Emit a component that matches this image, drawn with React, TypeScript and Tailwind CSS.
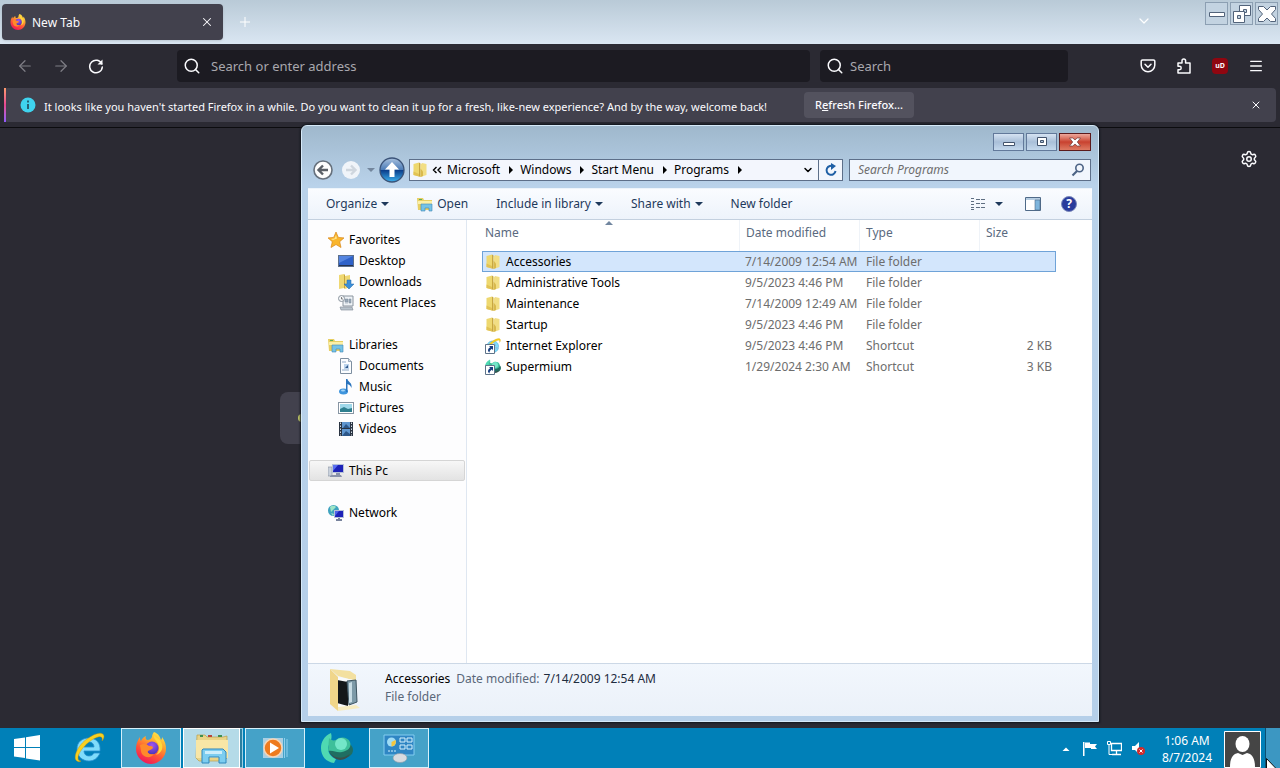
import { useId } from "react";
import type { ReactNode } from "react";
import { ArrowLeft, ArrowRight, ChevronDown, Menu, Plus, Search, Settings, X } from "lucide-react";

const FirefoxLogo = ({ className }: { className: string }) => {
  const id = useId();
  return (
    <svg viewBox="0 0 32 32" className={className} aria-hidden="true">
      <defs>
        <linearGradient id={id + "a"} x1="0.8" y1="0" x2="0.3" y2="1">
          <stop offset="0" stopColor="#fff04a" />
          <stop offset="0.35" stopColor="#ffa22e" />
          <stop offset="0.65" stopColor="#ff5537" />
          <stop offset="1" stopColor="#f0155c" />
        </linearGradient>
        <radialGradient id={id + "b"} cx="0.5" cy="0.3" r="0.7">
          <stop offset="0" stopColor="#a255f0" />
          <stop offset="1" stopColor="#4a35b8" />
        </radialGradient>
      </defs>
      <path
        d="M19 0c5 2 6 5 7 8 1-1 1-2 1-3 3 4 4 8 4 12 0 8-7 15-15 15S1 25 1 17c0-4 1-8 4-12 0 2 0 3 1 4 1-2 2-4 5-5-1 2 0 3 1 4 3 0 4-1 5-3 0-2 1-4 2-5z"
        fill={`url(#${id}a)`}
      />
      <circle cx="17" cy="16" r="6.500" fill={`url(#${id}b)`} />
      <path d="M5 13c4-2 7-1 9 1 2 0 4 0 4 2-2 2-4 2-5 3-1 2 2 4 6 3-3 5-12 4-13-3z" fill="#ff8a2b" />
      <path d="M19 3c-1 5 5 6 5 13 0 3-1 5-3 7 6-2 8-8 5-13-1-3-5-4-7-7z" fill="#ffd83c" />
    </svg>
  );
};

const IeLogo = ({ className }: { className: string }) => (
  <svg viewBox="0 0 32 32" className={className} aria-hidden="true">
    <path
      d="M27 21c-2 5-6 8-11 8-7 0-12-5-12-12S9 6 16 6s12 5 11 13H11c0 3 2 5 5 5 2 0 4-1 5-3zM11 15h10c0-3-2-5-5-5s-5 2-5 5z"
      fill="#7fdcfb"
      stroke="#2a8fd0"
      strokeWidth="0.800"
    />
    <path d="M4 29C-1 26 5 13 14 7 22 1 30-1 31 4c0 2-1 4-2 5 1-4-1-5-4-4C17 7 5 19 5 26c0 2 1 3 3 3-1 1-3 1-4 0z" fill="#f8d01f" stroke="#c48f0b" strokeWidth="0.400" />
  </svg>
);

const SupermiumLogo = ({ className }: { className: string }) => (
  <svg viewBox="0 0 32 32" className={className} aria-hidden="true">
    <ellipse cx="20" cy="18" rx="12" ry="9" fill="#1f6e62" />
    <path d="M10 1C3 4 0 10 0 16c0 8 5 14 13 15l2-4c-5-2-8-6-8-11 1-5 5-8 3-15z" fill="#4fd9b2" />
    <path d="M8 6c2 2 4 3 7 2 4-4 12-3 14 2 2 6-3 9-8 10-6 1-8-2-14-1z" fill="#3ebf9a" />
    <circle cx="20" cy="12" r="6" fill="#74e6c8" />
    <path d="M9 21c5 6 13 6 20 1-4 7-14 9-20-1z" fill="#3a4f4a" />
  </svg>
);

const Folder = () => (
  <svg viewBox="0 0 16 16" className="size-4" aria-hidden="true">
    <path d="M1.500 2L7 .500v14L1.500 13z" fill="#eed86f" />
    <path d="M7 .5l1.500 1V15L7 14.500z" fill="#c8a741" />
    <path d="M8.500 3L10 1l4.500 1v11l-6 2z" fill="#f2de84" />
    <path d="M8.500 6.500l2.500 3V14l-2.500 1z" fill="#d9b94d" />
    <path d="M1.500 9.500L7 12v2.500L1.500 13z" fill="#e2c355" />
  </svg>
);

const LibraryIcon = () => (
  <svg viewBox="0 0 16 16" className="size-4" aria-hidden="true">
    <path d="M0 2h6l1 2h8v10H1z" fill="#e8cf63" />
    <path d="M1 5h14v3H1z" fill="#fbf0a8" />
    <path d="M2 3h3v1H2z" fill="#5faf58" />
    <path d="M4 8h11v7h-3v-3H8v3H4z" fill="#76c3e6" stroke="#4288b5" strokeWidth="0.600" />
  </svg>
);

const StarIcon = () => (
  <svg viewBox="0 0 16 16" className="size-4" aria-hidden="true">
    <path d="M8 0l2.300 5.400 5.700.5-4.300 3.800 1.300 5.800L8 12.500l-5 3 1.300-5.800L0 5.900l5.700-.5z" fill="#f9b52b" stroke="#d9861a" strokeWidth="0.700" />
    <path d="M8 3l1 3.500L5 8 3 7l3.500-.5z" fill="#ffe48a" />
  </svg>
);

const DesktopIcon = () => (
  <svg viewBox="0 0 16 16" className="size-4" aria-hidden="true">
    <rect x="0.500" y="2.500" width="15" height="11" fill="#2f62c9" stroke="#5c6f8c" />
    <path d="M1 3h14L1 10z" fill="#5585e0" />
    <path d="M1 12h14v1H1z" fill="#26334f" />
  </svg>
);

const DownloadsIcon = () => (
  <svg viewBox="0 0 16 16" className="size-4" aria-hidden="true">
    <path d="M1 1l5-1v14l-5 1zM7 2l5-1v12l-5 2z" fill="#efd873" />
    <path d="M6 0l1 1v14l-1-1z" fill="#c5a33c" />
    <path d="M9 6h4v4h3l-5 5-5-5h3z" fill="#3c8fd8" stroke="#2468a8" strokeWidth="0.500" />
  </svg>
);

const RecentIcon = () => (
  <svg viewBox="0 0 16 16" className="size-4" aria-hidden="true">
    <path d="M5 1h10v10H5z" fill="#eef2f6" stroke="#8a949e" />
    <path d="M7 4h3v3H7zM11 4h2v4h-2zM7 8h3" fill="#9aa9b8" stroke="#7b8a99" strokeWidth="0.500" />
    <circle cx="3.500" cy="3.500" r="3" fill="#f4f6f8" stroke="#8a949e" />
    <path d="M3.500 2v2h1.500" stroke="#555" fill="none" strokeWidth="0.700" />
    <path d="M2 12h12l1 3H3z" fill="#b9c3cc" stroke="#7d8893" strokeWidth="0.600" />
  </svg>
);

const DocumentsIcon = () => (
  <svg viewBox="0 0 16 16" className="size-4" aria-hidden="true">
    <path d="M2.500.5h8l3 3v12h-11z" fill="#fbfdff" stroke="#7d8ea0" />
    <path d="M4 4h4M4 12h7" stroke="#8fa9c6" />
    <path d="M6 6h5v5H6z" fill="#bcd4ec" />
    <path d="M7 10l3-3v3z" fill="#31598c" />
    <path d="M10.500.5v3h3" fill="#d6e1ec" stroke="#7d8ea0" strokeWidth="0.700" />
  </svg>
);

const MusicIcon = () => (
  <svg viewBox="0 0 16 16" className="size-4" aria-hidden="true">
    <ellipse cx="5.500" cy="12.500" rx="4.500" ry="3" fill="#3f95dd" />
    <path d="M8 0h1.500c0 3 5 3 4 9-1-3-3-3.500-4-4v8H8z" fill="#2a74bd" />
    <ellipse cx="5" cy="11.500" rx="2" ry="1" fill="#a4d4f7" />
  </svg>
);

const PicturesIcon = () => (
  <svg viewBox="0 0 16 16" className="size-4" aria-hidden="true">
    <rect x="0.500" y="2.500" width="15" height="11" fill="#fff" stroke="#8795a3" />
    <path d="M2 4h12v8H2z" fill="#9fd8ea" />
    <path d="M2 9l4-2 4 2 4-1v4H2z" fill="#2e7f8f" />
  </svg>
);

const VideosIcon = () => (
  <svg viewBox="0 0 16 16" className="size-4" aria-hidden="true">
    <path d="M1 1h14v14H1z" fill="#2a3442" />
    <path d="M4 1h8v6H4zM4 8h8v7H4z" fill="#5f96cf" />
    <path d="M5 7l3-4 4 4zM4 15l4-5 4 3v2z" fill="#2c5688" />
    <path d="M2.500 1.500v13M13.500 1.500v13" stroke="#d5dde6" strokeDasharray="1.500 1.500" />
  </svg>
);

const ComputerIcon = () => (
  <svg viewBox="0 0 16 16" className="size-4" aria-hidden="true">
    <path d="M0 4h4v9H0z" fill="#c9d1dc" stroke="#8791a0" strokeWidth="0.600" />
    <path d="M4 1h12v9H4z" fill="#b5c1d8" />
    <path d="M5 2h10v7H5z" fill="#1d22b8" />
    <path d="M5 2h5l-5 6z" fill="#5b6ff0" />
    <path d="M8 10h4v2H8zM2 13l2-1h9l1 2H2z" fill="#8a93ab" />
  </svg>
);

const NetworkIcon = () => (
  <svg viewBox="0 0 16 16" className="size-4" aria-hidden="true">
    <circle cx="5.500" cy="5.500" r="5.500" fill="#3fa3bf" />
    <path d="M2 2c3-2 5-1 6 0L5 5 3 7zM3 8l3 1-1 2z" fill="#9ee5c6" />
    <path d="M6 5h10v8H6z" fill="#b5c1d8" />
    <path d="M7 6h8v6H7z" fill="#1d22b8" />
    <path d="M7 6h4l-4 5z" fill="#4f63e8" />
    <path d="M10 13h2v1h2v2H8v-2h2z" fill="#77829c" />
  </svg>
);

const Shortcut = ({ children }: { children: ReactNode }) => (
  <span className="relative block size-4">
    {children}
    <svg viewBox="0 0 10 10" className="absolute bottom-0 left-0 size-[10px]" aria-hidden="true">
      <path d="M.5.5h9v9h-9z" fill="#fff" stroke="#5e7389" />
      <path d="M4 2h4v4L6.700 4.700C5 6 4.500 7 4.500 8.500 2 7 3 4.500 5.300 3.300z" fill="#173e80" />
    </svg>
  </span>
);

const Caret = ({ className = "size-2" }: { className?: string }) => (
  <svg viewBox="0 0 8 8" className={className} aria-hidden="true">
    <path d="M0 2h8L4 6z" fill="currentColor" />
  </svg>
);

const crumbs = ["Microsoft", "Windows", "Start Menu", "Programs"];

const groups = [
  {
    label: "Favorites",
    icon: <StarIcon />,
    items: [
      { label: "Desktop", icon: <DesktopIcon /> },
      { label: "Downloads", icon: <DownloadsIcon /> },
      { label: "Recent Places", icon: <RecentIcon /> },
    ],
  },
  {
    label: "Libraries",
    icon: <LibraryIcon />,
    items: [
      { label: "Documents", icon: <DocumentsIcon /> },
      { label: "Music", icon: <MusicIcon /> },
      { label: "Pictures", icon: <PicturesIcon /> },
      { label: "Videos", icon: <VideosIcon /> },
    ],
  },
  { label: "This Pc", icon: <ComputerIcon />, items: [], active: true },
  { label: "Network", icon: <NetworkIcon />, items: [] },
];

const files = [
  { name: "Accessories", date: "7/14/2009 12:54 AM", type: "File folder", size: "", icon: <Folder />, selected: true },
  { name: "Administrative Tools", date: "9/5/2023 4:46 PM", type: "File folder", size: "", icon: <Folder /> },
  { name: "Maintenance", date: "7/14/2009 12:49 AM", type: "File folder", size: "", icon: <Folder /> },
  { name: "Startup", date: "9/5/2023 4:46 PM", type: "File folder", size: "", icon: <Folder /> },
  { name: "Internet Explorer", date: "9/5/2023 4:46 PM", type: "Shortcut", size: "2 KB", icon: <Shortcut><IeLogo className="size-4" /></Shortcut> },
  { name: "Supermium", date: "1/29/2024 2:30 AM", type: "Shortcut", size: "3 KB", icon: <Shortcut><SupermiumLogo className="size-4" /></Shortcut> },
];

const TabStrip = () => (
  <div className="flex h-[44px] items-start bg-linear-to-b from-[#b9cad7] to-[#dae6f2] pl-[2px]">
    <div className="mt-1 flex h-9 w-[221px] items-center rounded bg-[#42414d] pr-2 pl-2 text-[#fbfbfe] shadow">
      <FirefoxLogo className="size-4" />
      <span className="ml-[6px] flex-auto pt-[2px]">New Tab</span>
      <button aria-label="Close tab" className="flex size-4 items-center justify-center">
        <X className="size-[14px]" strokeWidth={1.8} />
      </button>
    </div>
    <button aria-label="New tab" className="mt-[14px] ml-[14px] text-white">
      <Plus className="size-4" strokeWidth={1.5} />
    </button>
    <button aria-label="List tabs" className="mt-[13px] mr-[53px] ml-auto text-white">
      <ChevronDown className="size-4" strokeWidth={1.8} />
    </button>
    <div className="mt-[2px] mr-[2px] flex gap-[2px]">
      <button aria-label="Minimize" className="flex h-[23px] w-[23px] items-center justify-center border border-[#8c9fb2] bg-[#c3d3e1]">
        <svg viewBox="0 0 18 18" className="size-[18px]"><path d="M1.500 7.500h15v4h-15z" fill="#fff" stroke="#52637a" /></svg>
      </button>
      <button aria-label="Restore" className="flex h-[23px] w-[23px] items-center justify-center border border-[#8c9fb2] bg-[#c3d3e1]">
        <svg viewBox="0 0 20 20" className="size-5" fillRule="evenodd" fill="#fff" stroke="#52637a">
          <path d="M7.500 1.500h11v10h-11zM11.500 5.500v3h3v-3z" />
          <path d="M1.500 7.500h11v11h-11zM5.500 11.500v3h3v-3z" />
        </svg>
      </button>
      <button aria-label="Close" className="flex h-[23px] w-[23px] items-center justify-center border border-[#8c9fb2] bg-[#c3d3e1]">
        <svg viewBox="0 0 20 20" className="size-5">
          <path d="M1.500 2.500h5L10 6l3.500-3.500h5v3L14.500 10l4 4.500v3h-5L10 14l-3.500 3.500h-5v-3l4-4.500-4-4.500z" fill="#fff" stroke="#52637a" />
        </svg>
      </button>
    </div>
  </div>
);

const NavBar = () => (
  <div className="flex h-[43px] items-center bg-[#2b2a33] pr-4 pl-4 text-[#fbfbfe]">
    <button aria-label="Back" className="text-[#7f7e86]"><ArrowLeft className="size-[18px]" strokeWidth={1.6} /></button>
    <button aria-label="Forward" className="ml-[18px] text-[#7f7e86]"><ArrowRight className="size-[18px]" strokeWidth={1.6} /></button>
    <button aria-label="Reload" className="ml-[18px]">
      <svg viewBox="0 0 16 16" className="size-4" fill="none" stroke="currentColor" strokeWidth="1.500" strokeLinecap="round">
        <path d="M13.800 6A6.300 6.300 0 1 0 14.300 9" />
        <path d="M14.500 1.500v5h-5z" fill="currentColor" stroke="none" />
      </svg>
    </button>
    <label className="ml-[73px] flex h-8 flex-auto items-center gap-[10px] rounded bg-[#1c1b22] pl-[6px]">
      <Search className="size-[18px] flex-none" strokeWidth={2} />
      <input aria-label="Address" placeholder="Search or enter address" className="w-full bg-transparent text-[13px] outline-none placeholder:text-[#a9a8ae]" />
    </label>
    <label className="mr-[72px] ml-[10px] flex h-8 w-[248px] items-center gap-[6px] rounded bg-[#1c1b22] pl-[6px]">
      <Search className="size-[18px] flex-none" strokeWidth={2} />
      <input aria-label="Search" placeholder="Search" className="w-full bg-transparent text-[13px] outline-none placeholder:text-[#a9a8ae]" />
    </label>
    <div className="flex gap-5">
      <button aria-label="Save to Pocket">
        <svg viewBox="0 0 16 16" className="size-4" fill="none" stroke="currentColor" strokeWidth="1.500" strokeLinecap="round" strokeLinejoin="round">
          <path d="M2.500 2h11a1.300 1.300 0 0 1 1.300 1.300V7a6.800 6.800 0 0 1-13.600 0V3.300A1.300 1.300 0 0 1 2.500 2z" />
          <path d="M5 6.300l3 3 3-3" />
        </svg>
      </button>
      <button aria-label="Extensions">
        <svg viewBox="0 0 16 16" className="size-4" fill="none" stroke="currentColor" strokeWidth="1.500" strokeLinejoin="round">
          <path d="M6 5V2.800a1.800 1.800 0 0 1 3.600 0V5H14v10H2v-3.300h1.500a1.700 1.700 0 0 0 0-3.400H2V5z" />
        </svg>
      </button>
      <button aria-label="uBlock Origin" className="flex size-4 items-center justify-center rounded bg-[#8f0610] text-[7px] font-bold">uD</button>
      <button aria-label="Menu"><Menu className="size-4" strokeWidth={2} /></button>
    </div>
  </div>
);

const Notice = () => (
  <div className="h-[41px] border-b border-[#0c0c0f] bg-[#2b2a33] px-1 pt-[1px]">
    <div className="flex h-[34px] items-center rounded bg-[#42414d] pr-3 text-[#fbfbfe]">
      <div className="h-full w-[2px] bg-linear-to-b from-[#ff9a6b] via-[#e6458f] to-[#9059ff]" />
      <svg viewBox="0 0 16 16" className="ml-[14px] size-4" aria-hidden="true">
        <circle cx="8" cy="8" r="7.500" fill="#3fd3ee" />
        <path d="M8 3.500v2M8 7v5" stroke="#1f4456" strokeWidth="1.600" />
      </svg>
      <p className="ml-2 w-[740px] pt-[3px] text-[11px]">
        It looks like you haven't started Firefox in a while. Do you want to clean it up for a fresh, like-new experience? And by the way, welcome back!
      </p>
      <button className="ml-5 h-[26px] w-[110px] rounded bg-[#53525e] text-[11px] font-medium">
        R<span className="underline">e</span>fresh Firefox...
      </button>
      <button aria-label="Dismiss" className="mr-[2px] ml-auto"><X className="size-3" /></button>
    </div>
  </div>
);

const WindowControls = () => (
  <div className="flex h-[25px] items-end justify-end gap-[2px] pr-[1px]">
    <button aria-label="Minimize" className="flex h-[18px] w-[31px] items-center justify-center border border-[#62799a] bg-linear-to-b from-[#d5e3f2] via-[#a9bfd8] to-[#c4d8ec]">
      <svg viewBox="0 0 12 10" className="h-[10px] w-3"><path d="M.5 5.500h11v3H.5z" fill="#fff" stroke="#42536c" /></svg>
    </button>
    <button aria-label="Maximize" className="flex h-[18px] w-[31px] items-center justify-center border border-[#62799a] bg-linear-to-b from-[#d5e3f2] via-[#a9bfd8] to-[#c4d8ec]">
      <svg viewBox="0 0 12 10" className="h-[10px] w-3"><path d="M1.500.5h9v8h-9zM4.500 3.500h3v2h-3z" fill="#fff" fillRule="evenodd" stroke="#42536c" /></svg>
    </button>
    <button aria-label="Close" className="flex h-[18px] w-[32px] items-center justify-center border border-[#5b1a1c] bg-linear-to-b from-[#eda79b] via-[#c8412f] to-[#dd7a63]">
      <svg viewBox="0 0 12 10" className="h-[10px] w-3">
        <path d="M.5 1h3.300L6 3l2.200-2h3.300L8.300 5l3.200 4H8.200L6 7 3.800 9H.5l3.200-4z" fill="#fff" stroke="#6b3a3a" strokeWidth="0.700" />
      </svg>
    </button>
  </div>
);

const LocationBar = () => (
  <div className="flex h-[37px] items-center pr-[1px] pl-[5px]">
    <button aria-label="Back">
      <svg viewBox="0 0 20 20" className="size-5">
        <circle cx="10" cy="10" r="9" fill="#fdfdfd" stroke="#66707c" strokeWidth="1.600" />
        <path d="M15 10H6M10 5.500L5.500 10l4.500 4.500" fill="none" stroke="#5a5f66" strokeWidth="2.400" />
      </svg>
    </button>
    <button aria-label="Forward" className="ml-2">
      <svg viewBox="0 0 20 20" className="size-5">
        <circle cx="10" cy="10" r="9" fill="#f0f4f9" />
        <path d="M5 10h9M10 5.500l4.500 4.500-4.500 4.500" fill="none" stroke="#cfd6de" strokeWidth="2.400" />
      </svg>
    </button>
    <button aria-label="Recent pages" className="ml-[6px] text-[#73869d]"><Caret /></button>
    <button aria-label="Up" className="ml-1">
      <svg viewBox="0 0 26 26" className="size-[26px]">
        <defs>
          <linearGradient id="up" x1="0" y1="0" x2="0" y2="1">
            <stop offset="0" stopColor="#a9c1de" />
            <stop offset="0.480" stopColor="#4d7db8" />
            <stop offset="0.520" stopColor="#0b3f8c" />
            <stop offset="1" stopColor="#3eb2ee" />
          </linearGradient>
        </defs>
        <circle cx="13" cy="13" r="12" fill="url(#up)" stroke="#3b5378" strokeWidth="1.300" />
        <path d="M13 5l7 7.500h-4.500V20h-5v-7.500H6z" fill="#fff" />
      </svg>
    </button>
    <nav aria-label="Path" className="ml-1 flex h-[22px] flex-auto items-center border border-[#5d6f89] bg-[#f3f6fd] pl-[2px] text-black">
      <Folder />
      <svg viewBox="0 0 10 8" className="ml-1 h-2 w-[10px]" fill="none" stroke="currentColor" strokeWidth="1.400" aria-hidden="true">
        <path d="M4.500 1l-3 3 3 3M9 1L6 4l3 3" />
      </svg>
      {crumbs.map((name) => (
        <div key={name} className="flex items-center">
          <button className="ml-1 px-[1px]">{name}</button>
          <svg viewBox="0 0 8 8" className="ml-[6px] size-2" aria-hidden="true"><path d="M2 0v8l4-4z" fill="currentColor" /></svg>
        </div>
      ))}
      <button aria-label="Previous locations" className="mr-1 ml-auto"><ChevronDown className="size-3" strokeWidth={3} /></button>
      <button aria-label="Refresh" className="flex h-full w-6 items-center justify-center border-l border-[#5d6f89]">
        <svg viewBox="0 0 14 14" className="size-[14px]">
          <path d="M9.500 3.500A4.500 4.500 0 1 0 11.500 8" fill="none" stroke="#1f5fa5" strokeWidth="2" />
          <path d="M7 0l5 3-5 4z" fill="#1f5fa5" />
        </svg>
      </button>
    </nav>
    <label className="ml-[6px] flex h-[22px] w-[242px] items-center border border-[#5d6f89] bg-[#f1f6fd] pr-[5px] pl-2">
      <input aria-label="Search Programs" placeholder="Search Programs" className="w-full bg-transparent italic outline-none placeholder:text-[#6d6d6d]" />
      <svg viewBox="0 0 14 14" className="size-[14px] shrink-0" fill="none" stroke="#4c6385" aria-hidden="true">
        <circle cx="8.500" cy="5" r="3.700" strokeWidth="1.600" />
        <path d="M6 8l-4.500 4.500" strokeWidth="2.200" />
      </svg>
    </label>
  </div>
);

const CommandBar = () => (
  <div className="flex h-8 items-center border-t border-b border-t-[#edf4fb] border-b-[#c3d0df] bg-linear-to-b from-[#fafcff] to-[#edf3fb] px-[18px] text-[#1e395b]">
    <button className="flex items-center gap-1">Organize <Caret /></button>
    <button className="ml-7 flex items-center gap-1"><LibraryIcon /> Open</button>
    <button className="ml-7 flex items-center gap-1">Include in library <Caret /></button>
    <button className="ml-7 flex items-center gap-1">Share with <Caret /></button>
    <button className="ml-7">New folder</button>
    <button aria-label="Change view" className="ml-auto flex items-center gap-[9px]">
      <svg viewBox="0 0 16 14" className="h-[14px] w-4" stroke="#5f6f82">
        <path d="M1 1.500h3M1 4.500h3M1 7.500h3M1 10.500h3M1 12.500h3" />
        <path d="M6 2.500h9M6 6.500h9M6 10.500h9" strokeDasharray="4 1" />
      </svg>
      <Caret />
    </button>
    <button aria-label="Preview pane" className="ml-[22px]">
      <svg viewBox="0 0 16 14" className="h-[14px] w-4">
        <path d="M.5.500h15v13H.5z" fill="#fff" stroke="#4f6a88" />
        <path d="M1 1h14v2H1z" fill="#b6cde2" />
        <path d="M10 3h5v10h-5z" fill="#7fb5dc" stroke="#4f6a88" strokeWidth="0.600" />
      </svg>
    </button>
    <button aria-label="Help" className="-mr-[3px] ml-5 flex size-4 items-center justify-center rounded-full border border-[#7c89bb] bg-[#2a3c9c] text-[12px] leading-none font-bold text-white">?</button>
  </div>
);

const Sidebar = () => (
  <nav aria-label="Folders" className="flex w-[159px] flex-none flex-col gap-[21px] border-r border-[#dfe7f1] bg-[#fdfdfe] pt-[9px] pr-[1px] pl-[1px] text-black">
    {groups.map((group) => (
      <div key={group.label}>
        <a
          href="#"
          className={
            group.active
              ? "flex h-[21px] items-center gap-[5px] rounded-xs border border-[#d5d5d5] bg-linear-to-b from-[#f7f7f7] to-[#e3e3e3] pl-[18px]"
              : "flex h-[21px] items-center gap-[5px] pl-[19px]"
          }
        >
          {group.icon}
          {group.label}
        </a>
        {group.items.map((item) => (
          <a key={item.label} href="#" className="flex h-[21px] items-center gap-[5px] pl-[29px]">
            {item.icon}
            {item.label}
          </a>
        ))}
      </div>
    ))}
  </nav>
);

const FileTable = () => (
  <div className="relative flex-auto bg-white pl-[15px]">
    <table className="w-[574px] table-fixed border-collapse text-left text-[#6d6d6d]">
      <colgroup>
        <col />
        <col className="w-[120px]" />
        <col className="w-[120px]" />
        <col className="w-[77px]" />
      </colgroup>
      <thead>
        <tr className="h-[31px] text-[#5a6a80]">
          <th className="pb-[6px] pl-[3px] font-normal">Name</th>
          <th className="bg-linear-to-r from-[#eff3f8] from-[1px] to-transparent to-[1px] pb-[6px] pl-[7px] font-normal">Date modified</th>
          <th className="bg-linear-to-r from-[#eff3f8] from-[1px] to-transparent to-[1px] pb-[6px] pl-[7px] font-normal">Type</th>
          <th className="bg-linear-to-r from-[#eff3f8] from-[1px] to-transparent to-[1px] pb-[6px] pl-[7px] font-normal">Size</th>
        </tr>
      </thead>
      <tbody>
        {files.map((file) => (
          <tr key={file.name} className={file.selected ? "h-[21px] bg-[#d3e6fc] outline outline-offset-[-1px] outline-[#6fa3d8]" : "h-[21px]"}>
            <td className="p-0 pl-[3px] text-black">
              <div className="flex items-center gap-[5px]">
                {file.icon}
                {file.name}
              </div>
            </td>
            <td className="p-0 pl-[6px] whitespace-nowrap">{file.date}</td>
            <td className="p-0 pl-[7px]">{file.type}</td>
            <td className="p-0 pr-1 text-right">{file.size}</td>
          </tr>
        ))}
      </tbody>
    </table>
    <svg viewBox="0 0 8 4" className="absolute top-[1px] left-[138px] h-1 w-2 text-[#71869f]" aria-hidden="true">
      <path d="M0 4l4-4 4 4z" fill="currentColor" />
    </svg>
  </div>
);

const DetailsPane = () => (
  <div className="flex h-[53px] flex-none items-start border-t border-[#ccd8e6] bg-linear-to-b from-[#f2f7fd] to-[#ebf1f9] pt-[2px] pl-[18px]">
    <svg viewBox="0 0 40 48" className="h-12 w-10" aria-hidden="true">
      <path d="M4 3l20 2 6 4v6L12 10z" fill="#f3e0a0" />
      <path d="M12 11l16 3-2 27H12z" fill="#f8fafb" />
      <path d="M11 14l11 2v24l-11-3z" fill="#14181a" />
      <path d="M21 15l9-1 1 22-8 3z" fill="#7d9aa8" stroke="#3d5460" />
      <path d="M23 17l3-1v20l-3 1z" fill="#c8dce4" />
      <path d="M4 3l8 8v34l-8-7z" fill="#f0d68a" />
      <path d="M12 41l18-2 4 3-22 3z" fill="#f7ecc0" />
    </svg>
    <div className="ml-[19px] pt-1 text-[#5a6779]">
      <p className="leading-[18px]">
        <span className="text-black">Accessories</span>
        <span className="ml-[6px]">Date modified:</span>
        <span className="ml-1 text-[#1e2c3f]">7/14/2009 12:54 AM</span>
      </p>
      <p className="leading-[18px]">File folder</p>
    </div>
  </div>
);

const Explorer = () => (
  <section
    aria-label="Programs"
    className="absolute top-[125px] bottom-[6px] left-[301px] flex w-[798px] flex-col rounded-t-md border border-[#d6e9f8] bg-linear-to-b from-[#9fb8cc] via-[#b9d2ea] via-10% to-[#b5cfe9] px-[6px] pb-[5px] shadow-[0_0_2px_1px_#10151d]"
  >
    <WindowControls />
    <LocationBar />
    <CommandBar />
    <div className="flex min-h-0 flex-auto">
      <Sidebar />
      <FileTable />
    </div>
    <DetailsPane />
  </section>
);

const tile = "flex h-10 w-[60px] items-center justify-center border border-[#d6f0fa] bg-[#45a2c8]";
const plainTile = "flex h-10 w-[60px] items-center justify-center";

const Taskbar = () => (
  <footer className="relative flex h-10 flex-none items-center bg-[#0080b8] text-white">
    <button aria-label="Start" className="flex h-10 w-[54px] items-center justify-center">
      <svg viewBox="0 0 28 26" className="h-[26px] w-7" fill="#fff">
        <path d="M1 4l11-1.500V12H1zM13 2.300L27 0v12H13zM1 13h11v10L1 21.500zM13 13h14v12.500l-14-2z" />
      </svg>
    </button>
    <div className="ml-[5px] flex gap-[2px]">
      <button aria-label="Internet Explorer" className={plainTile}><IeLogo className="size-8" /></button>
      <button aria-label="Firefox" className={tile}><FirefoxLogo className="size-8" /></button>
      <button aria-label="File Explorer" className="flex h-10 w-[60px]">
        <span className="flex h-10 flex-auto items-center justify-center border border-white bg-[#b5dbe8]">
          <svg viewBox="0 0 34 32" className="h-8 w-[34px]">
            <path d="M2 3h8l2 2h16l4-1v22l-3 3H4l-3-3z" fill="#e9d488" stroke="#b99d4a" strokeWidth="0.700" />
            <path d="M5 3h3v2H5zM23 3h4v2h-4z" fill="#3f8f50" />
            <path d="M13 3h4v2h-4z" fill="#b8463b" />
            <path d="M1 8h32v18H1z" fill="#f8e6a6" />
            <path d="M8 17h20l3 3v11h-7v-6H14v6H7V18z" fill="#7ccdf0" stroke="#2f87bd" />
            <path d="M10 19h17v3H10z" fill="#cdeefb" />
          </svg>
        </span>
        <span className="h-10 w-[3px] border-y border-r border-[#9cd1e4] bg-[#2c7f9f]" />
      </button>
      <button aria-label="Media Player" className={tile}>
        <svg viewBox="0 0 28 26" className="h-[26px] w-7">
          <path d="M2 3h20v20H2z" fill="#a9cfe3" />
          <path d="M23.500 3v20M26 4v18" stroke="#8fd0ee" />
          <circle cx="12" cy="13" r="9" fill="#ee7b1e" stroke="#f6d5b5" strokeWidth="1.500" />
          <path d="M9 7.500l9 5.500-9 5.500z" fill="#fff" />
        </svg>
      </button>
      <button aria-label="Supermium" className={plainTile}><SupermiumLogo className="size-8" /></button>
      <button aria-label="Control Panel" className={tile}>
        <svg viewBox="0 0 32 30" className="h-[30px] w-8">
          <path d="M1 2h30v20H1z" fill="#2f86c4" stroke="#83cdf0" />
          <circle cx="8.500" cy="9" r="4.500" fill="#9fdcf5" />
          <path d="M8.500 9l4-2c1 4-1 6-4 6.500z" fill="#f4c63d" />
          <path d="M17 5h5v4h-5zM24 5h5v4h-5zM17 12h5v4h-5zM24 12h5v4h-5z" fill="none" stroke="#d5f1fd" />
          <path d="M5 18h8" stroke="#d5f1fd" strokeDasharray="2 1" />
          <ellipse cx="17" cy="25" rx="7" ry="4.500" fill="#d8dbe0" stroke="#8d99a5" strokeWidth="0.600" />
        </svg>
      </button>
    </div>
    <div className="ml-auto flex items-center gap-2">
      <button aria-label="Show hidden icons">
        <svg viewBox="0 0 16 16" className="size-4"><path d="M4.500 11h7L8 7.500z" fill="#fff" /></svg>
      </button>
      <svg viewBox="0 0 16 16" className="size-4" fill="#fff" aria-hidden="true">
        <path d="M1 2h1.500v14H1zM3 2.500h5v1.500h7l-2 2.500 2 2.500H9V8H3z" />
      </svg>
      <svg viewBox="0 0 16 16" className="size-4" fill="none" stroke="#fff" aria-hidden="true">
        <path d="M5.500 3.500h10v7h-10zM10.500 11v3M6 14.500h9" strokeWidth="1.300" />
        <path d="M1.500 1.500h3v3h-3zM3 5v9.500h3" />
      </svg>
      <svg viewBox="0 0 16 16" className="size-4" aria-hidden="true">
        <path d="M2 6h3l4-4v12l-4-4H2z" fill="#fff" />
        <circle cx="11" cy="11" r="4" fill="#d22b2b" />
        <path d="M9.500 9.500l3 3M12.500 9.500l-3 3" stroke="#fff" />
      </svg>
      <div className="ml-1 w-[58px] pt-[2px] text-center text-[12px] leading-[17px]">
        <p>1:06 AM</p>
        <p>8/7/2024</p>
      </div>
      <svg viewBox="0 0 37 37" className="mt-[2px] size-[37px]" aria-hidden="true">
        <path d="M.5.500h36v36H.5z" fill="#454545" stroke="#fff" />
        <ellipse cx="18.500" cy="13" rx="7" ry="8" fill="#fff" />
        <path d="M6 36c0-9 3-13 8-14l4.500 2 4.500-2c5 1 8 5 8 14z" fill="#fff" />
      </svg>
    </div>
    <button aria-label="Show desktop" className="ml-1 h-10 w-[15px] border-l border-[#0a4f72] bg-[#3c97c2]" />
    <svg viewBox="0 0 12 19" className="absolute top-[30px] right-[2px] h-[19px] w-3" aria-hidden="true">
      <path d="M.5.500v15l3.500-3 2.500 5.500 2-1L6.200 11.500H11z" fill="#fff" stroke="#111" />
    </svg>
  </footer>
);

const App = () => {
  return (
    <div className="flex h-screen flex-col overflow-hidden bg-[#2b2a33] font-['Noto_Sans',sans-serif] text-[12px] leading-4">
      <main className="relative flex flex-auto flex-col">
        <TabStrip />
        <NavBar />
        <Notice />
        <div className="relative flex-auto bg-[#2b2a33]">
          <button aria-label="Personalize new tab" className="absolute top-[22px] right-[22px] text-[#fbfbfe]">
            <Settings className="size-[18px]" />
          </button>
          <div className="absolute top-[264px] left-[280px] flex h-[52px] w-10 items-center rounded-lg bg-[#42414d] pl-[18px]">
            <span className="size-2 rounded-full bg-[#c7cf6a]" />
          </div>
        </div>
        <Explorer />
      </main>
      <Taskbar />
    </div>
  );
};

export default App;
